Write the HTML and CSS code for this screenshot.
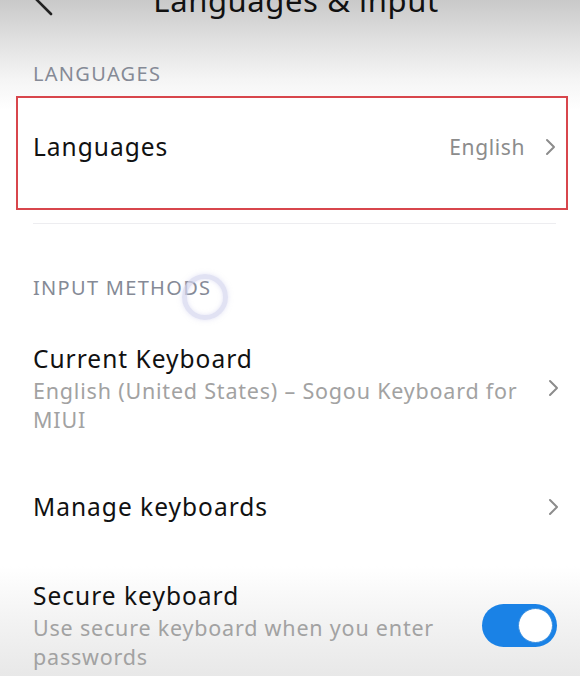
FILE: index.html
```html
<!DOCTYPE html>
<html>
<head>
<meta charset="utf-8">
<link rel="stylesheet" href="styles.css">
</head>
<body>
<div class="screen">
  <header class="topbar">
    <svg class="back" width="20" height="18" viewBox="0 0 20 18"><path d="M-2 -4 L16 14" fill="none" stroke="#222" stroke-width="2.6" stroke-linecap="round"/></svg>
    <h1 class="title">Languages &amp; input</h1>
  </header>

  <div class="section-label first">LANGUAGES</div>
  <div class="row highlighted">
    <div class="row-main">Languages</div>
    <div class="row-value">English</div>
    <svg class="chev" width="12" height="18" viewBox="0 0 12 18"><path d="M2 2 L9 9 L2 16" fill="none" stroke="#8c8c8c" stroke-width="2" stroke-linecap="round" stroke-linejoin="round"/></svg>
  </div>
  <div class="divider"></div>

  <div class="section-label second">INPUT METHODS<span class="spinner"></span></div>

  <div class="row multi first-item">
    <div class="row-text">
      <div class="row-main">Current Keyboard</div>
      <div class="row-sub">English (United States) – Sogou Keyboard for MIUI</div>
    </div>
    <svg class="chev" width="12" height="18" viewBox="0 0 12 18"><path d="M2 2 L9 9 L2 16" fill="none" stroke="#8c8c8c" stroke-width="2" stroke-linecap="round" stroke-linejoin="round"/></svg>
  </div>

  <div class="row single">
    <div class="row-main">Manage keyboards</div>
    <svg class="chev" width="12" height="18" viewBox="0 0 12 18"><path d="M2 2 L9 9 L2 16" fill="none" stroke="#8c8c8c" stroke-width="2" stroke-linecap="round" stroke-linejoin="round"/></svg>
  </div>

  <div class="row multi last-item">
    <div class="row-text">
      <div class="row-main">Secure keyboard</div>
      <div class="row-sub">Use secure keyboard when you enter passwords</div>
    </div>
    <div class="toggle"><span class="knob"></span></div>
  </div>
</div>
</body>
</html>
```
FILE: styles.css
```css
* { box-sizing: border-box; }
html, body { margin: 0; padding: 0; }
body {
  width: 580px;
  height: 676px;
  overflow: hidden;
  background: #fff;
  font-family: "Noto Sans", "Open Sans", sans-serif;
  color: #111;
}
.screen {
  position: relative;
  width: 580px;
  height: 676px;
  overflow: hidden;
  background: linear-gradient(to bottom, #c9c9c9 0px, #e3e3e3 45px, #f5f5f5 80px, #ffffff 110px, #ffffff 566px, #f3f3f3 620px, #e8e8e8 676px);
}
.topbar {
  height: 52px;
  display: flex;
  align-items: flex-start;
  position: relative;
}
.back {
  margin: 0 0 0 35px;
}
.title {
  margin: -22px 0 0 0;
  position: absolute;
  left: 0; right: 0;
  text-align: center;
  padding-left: 12px;
  font-size: 31px;
  letter-spacing: 0.6px;
  font-weight: 400;
  color: #111;
  line-height: 44px;
  white-space: nowrap;
}
.section-label {
  padding-left: 33px;
  font-size: 20px;
  color: #858a96;
  letter-spacing: 1.3px;
  line-height: 24px;
  position: relative;
}
.section-label.first { margin-top: 10px; }
.section-label.second { margin-top: 52px; }
.spinner {
  position: absolute;
  left: 182px;
  top: -2px;
  width: 46px;
  height: 46px;
  border-radius: 50%;
  border: 5px solid rgba(212, 214, 238, 0.7);
  box-shadow: 0 0 5px rgba(200, 200, 235, 0.5), inset 0 0 4px rgba(200, 200, 235, 0.5);
}
.row {
  display: flex;
  align-items: center;
  padding: 0 20px 0 33px;
}
.row-main {
  font-size: 24.5px;
  letter-spacing: 1px;
  color: #111;
  line-height: 32px;
  flex: 1;
}
.row-value {
  font-size: 21px;
  letter-spacing: 0.6px;
  color: #8c8c8c;
  margin-right: 20px;
}
.highlighted {
  margin: 10px 12px 0 16px;
  height: 114px;
  border: 2.5px solid #d8464c;
  padding: 0 9px 12px 15px;
  background: #fff;
}
.divider {
  margin: 13px 24px 0 33px;
  height: 1px;
  background: #ededf0;
}
.row-text { flex: 1; padding-right: 20px; }
.row-sub {
  font-size: 21.5px;
  letter-spacing: 0.8px;
  line-height: 29px;
  color: #a2a2a2;
}
.multi.first-item { margin-top: 42px; }
.multi .row-text .row-main { line-height: 34px; }
.single { margin-top: 57px; }
.multi.last-item { margin-top: 56px; }
.last-item .row-text { padding-right: 40px; }
.toggle {
  width: 75px;
  height: 43px;
  border-radius: 22px;
  background: #1a82e6;
  position: relative;
  flex: none;
  margin-top: 0;
  margin-right: 3px;
}
.knob {
  position: absolute;
  right: 4px;
  top: 4px;
  width: 35px;
  height: 35px;
  border-radius: 50%;
  background: #fff;
  border: 1.5px solid #3a8fe0;
}
```
